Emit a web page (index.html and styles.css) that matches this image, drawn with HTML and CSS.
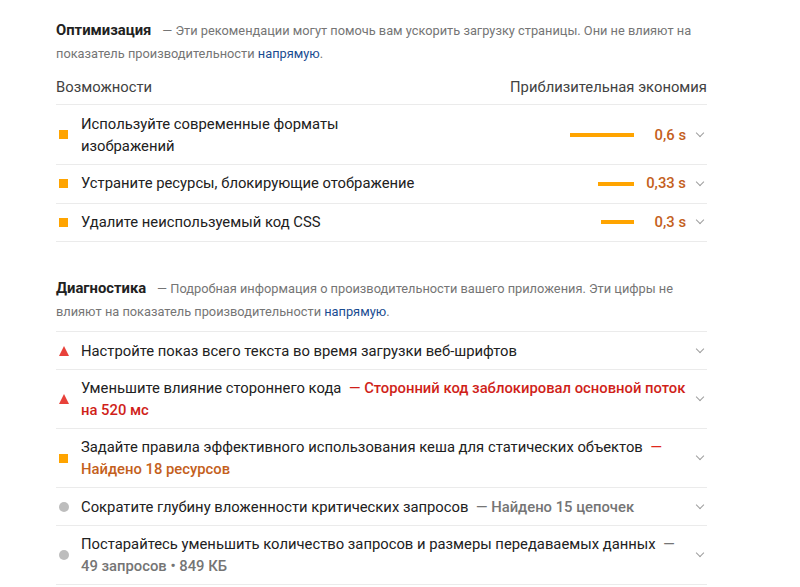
FILE: index.html
```html
<!DOCTYPE html>
<html lang="ru">
<head>
    <meta charset="UTF-8">
    <meta name="viewport" content="width=device-width, initial-scale=1.0">
    <title>Lighthouse - Производительность</title>
    <link rel="stylesheet" href="styles.css">
</head>
<body>
    <div class="report">
        <section class="group">
            <p class="group-head">
                <span class="group-title">Оптимизация</span>
                <span class="group-desc">— Эти рекомендации могут помочь вам ускорить загрузку страницы. Они не влияют на показатель производительности <a href="#">напрямую</a>.</span>
            </p>
            <div class="table-head">
                <span>Возможности</span>
                <span>Приблизительная экономия</span>
            </div>
            <div class="audit two-line">
                <i class="icon square"></i>
                <div class="audit-title">Используйте современные форматы<br>изображений</div>
                <div class="bar-wrap"><span class="bar" style="width: 64px"></span></div>
                <div class="value">0,6 s</div>
                <i class="chevron"></i>
            </div>
            <div class="audit">
                <i class="icon square"></i>
                <div class="audit-title">Устраните ресурсы, блокирующие отображение</div>
                <div class="bar-wrap"><span class="bar" style="width: 36px"></span></div>
                <div class="value">0,33 s</div>
                <i class="chevron"></i>
            </div>
            <div class="audit">
                <i class="icon square"></i>
                <div class="audit-title">Удалите неиспользуемый код CSS</div>
                <div class="bar-wrap"><span class="bar" style="width: 33px"></span></div>
                <div class="value">0,3 s</div>
                <i class="chevron"></i>
            </div>
        </section>

        <section class="group diagnostics">
            <p class="group-head">
                <span class="group-title">Диагностика</span>
                <span class="group-desc">— Подробная информация о производительности вашего приложения. Эти цифры не влияют на показатель производительности <a href="#">напрямую</a>.</span>
            </p>
            <div class="audit">
                <i class="icon triangle"></i>
                <div class="audit-title">Настройте показ всего текста во время загрузки веб-шрифтов</div>
                <i class="chevron"></i>
            </div>
            <div class="audit two-line">
                <i class="icon triangle"></i>
                <div class="audit-title">Уменьшите влияние стороннего кода <span class="fail">— Сторонний код заблокировал основной поток на 520 мс</span></div>
                <i class="chevron"></i>
            </div>
            <div class="audit two-line">
                <i class="icon square"></i>
                <div class="audit-title">Задайте правила эффективного использования кеша для статических объектов <span class="average"><b class="dash">—</b> Найдено 18 ресурсов</span></div>
                <i class="chevron"></i>
            </div>
            <div class="audit">
                <i class="icon circle"></i>
                <div class="audit-title">Сократите глубину вложенности критических запросов <span class="info">— Найдено 15 цепочек</span></div>
                <i class="chevron"></i>
            </div>
            <div class="audit two-line">
                <i class="icon circle"></i>
                <div class="audit-title">Постарайтесь уменьшить количество запросов и размеры передаваемых данных <span class="info">— 49 запросов • 849 КБ</span></div>
                <i class="chevron"></i>
            </div>
        </section>
    </div>
</body>
</html>
```

FILE: styles.css
```css
body {
    margin: 0;
    padding: 0;
    background-color: #ffffff;
    color: #212121;
    font-family: Roboto, "Noto Sans", Arial, sans-serif;
}
.report {
    width: 651px;
    margin-left: 56px;
    padding-top: 19px;
}
.group-head {
    margin: 0;
    line-height: 22px;
}
.group-title {
    font-size: 14.8px;
    font-weight: bold;
    color: #212121;
    margin-right: 7px;
}
.group-desc {
    font-size: 12.8px;
    color: #757575;
}
.group-desc a {
    color: #1a4c91;
    text-decoration: none;
}
.diagnostics {
    margin-top: 35px;
}
.diagnostics .group-head {
    padding-bottom: 8px;
    border-bottom: 1px solid #ebebeb;
}
.table-head {
    display: flex;
    justify-content: space-between;
    margin-top: 10px;
    padding: 1px 0 6px 0;
    font-size: 14.8px;
    line-height: 22px;
    color: #424242;
    border-bottom: 1px solid #ebebeb;
}
.audit {
    display: flex;
    align-items: center;
    padding: 8px 0;
    font-size: 14.8px;
    line-height: 21.5px;
    border-bottom: 1px solid #ebebeb;
}
.audit.two-line {
    padding: 7.5px 0;
    line-height: 22px;
}
.diagnostics .audit {
    padding: 7.5px 0;
    line-height: 22px;
}
.diagnostics .audit.two-line {
    padding: 7px 0;
}
.audit-title {
    flex: 1;
}
.audit-title span {
    margin-left: 4px;
}
.icon {
    flex: none;
    width: 10px;
    height: 10px;
    margin: 0 12px 0 3px;
}
.square {
    width: 9px;
    height: 9px;
    margin-right: 13px;
    background-color: #ffa400;
}
.triangle {
    width: 0;
    height: 0;
    border-left: 5px solid transparent;
    border-right: 5px solid transparent;
    border-bottom: 10px solid #e8413a;
}
.circle {
    border-radius: 50%;
    background-color: #bdbdbd;
}
.bar-wrap {
    flex: none;
    display: flex;
    justify-content: flex-end;
}
.bar {
    display: block;
    height: 4px;
    background-color: #ffa400;
}
.value {
    flex: none;
    width: 52px;
    text-align: right;
    color: #c4601c;
    font-weight: 500;
}
.fail {
    color: #d01f1a;
    font-weight: 500;
}
.average {
    color: #c4601c;
    font-weight: 500;
}
.average .dash {
    color: #e0281c;
    font-weight: 500;
}
.info {
    color: #757575;
    font-weight: 500;
}
.chevron {
    flex: none;
    width: 21px;
    height: 10px;
    position: relative;
}
.chevron::after {
    content: "";
    position: absolute;
    right: 4px;
    top: 0;
    width: 5px;
    height: 5px;
    border-right: 1px solid #9e9e9e;
    border-bottom: 1px solid #9e9e9e;
    transform: rotate(45deg);
}
```
